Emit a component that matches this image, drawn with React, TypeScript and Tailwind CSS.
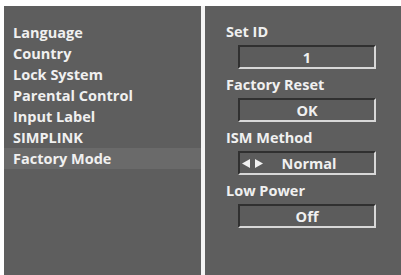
const menu = [
  "Language",
  "Country",
  "Lock System",
  "Parental Control",
  "Input Label",
  "SIMPLINK",
  "Factory Mode",
];

function ValueBox({ value, arrows = false }: { value: string; arrows?: boolean }) {
  return (
    <div className="relative ml-[33px] flex h-[24px] w-[138px] items-center justify-center border-2 border-b-[#d8d8d8] border-l-[#303030] border-r-[#d8d8d8] border-t-[#303030] bg-[#5c5c5c]">
      {arrows && (
        <svg className="absolute left-[2px] top-[6px]" width="22" height="9" viewBox="0 0 22 9">
          <polygon points="0,4.5 8,0 8,9" fill="#f2f2f2" />
          <polygon points="21,4.5 13,0 13,9" fill="#f2f2f2" />
        </svg>
      )}
      <span className={arrows ? "pl-[4px]" : ""}>{value}</span>
    </div>
  );
}

export default function App() {
  return (
    <div
      className="flex h-[275px] w-[401px] bg-white pl-[4px] pt-[6px] text-[14.5px] font-bold text-[#f0f0f0]"
      style={{ fontFamily: '"Open Sans", "DejaVu Sans", sans-serif' }}
    >
      <div className="w-[197px] bg-[#5e5e5e] pt-[16px]">
        {menu.map((item) => (
          <div
            key={item}
            className={`h-[21px] pl-[9px] leading-[21px] ${item === "Factory Mode" ? "bg-[#6a6a6a]" : ""}`}
          >
            {item}
          </div>
        ))}
      </div>
      <div className="w-[4px] bg-[#f4f4f4]" />
      <div className="flex-1 bg-[#5e5e5e] pt-[16px] leading-[19px]">
        <div className="pl-[21px]">Set ID</div>
        <div className="mt-[4px]">
          <ValueBox value="1" />
        </div>
        <div className="mt-[6px] pl-[21px]">Factory Reset</div>
        <div className="mt-[4px]">
          <ValueBox value="OK" />
        </div>
        <div className="mt-[6px] pl-[21px]">ISM Method</div>
        <div className="mt-[4px]">
          <ValueBox value="Normal" arrows />
        </div>
        <div className="mt-[6px] pl-[21px]">Low Power</div>
        <div className="mt-[4px]">
          <ValueBox value="Off" />
        </div>
      </div>
    </div>
  );
}
